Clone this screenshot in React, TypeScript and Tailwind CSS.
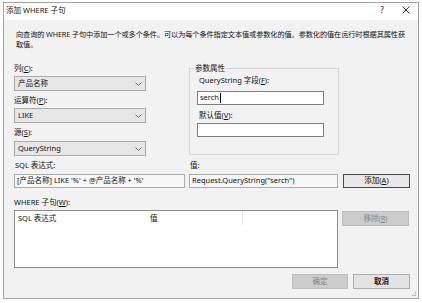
import React from "react"

function Chevron() {
  return (
    <svg width="7" height="4" viewBox="0 0 7 4" className="mr-[3px]">
      <path d="M0.5 0.5 L3.5 3.5 L6.5 0.5" fill="none" stroke="#6a6a6a" strokeWidth="1" />
    </svg>
  )
}

function Select({ value }: { value: string }) {
  return (
    <div className="flex h-[15px] w-[132px] items-center justify-between border border-[#acacac] bg-[#e6e6e6] pl-[3px]">
      <span>{value}</span>
      <Chevron />
    </div>
  )
}

function Label({ children, className = "" }: { children: React.ReactNode; className?: string }) {
  return <div className={`h-[12px] leading-[12px] whitespace-nowrap ${className}`}>{children}</div>
}

export default function App() {
  return (
    <div className="min-h-screen bg-white pl-[3px] pt-[2px] font-['Noto_Sans','Noto_Sans_CJK_SC',sans-serif] text-[7.5px] text-[#111]">
      <div className="relative flex h-[297px] w-[416px] flex-col border border-[#a3a3a3] bg-[#f2f2f2]">
        {/* Title bar */}
        <div className="flex h-[17px] items-start bg-white pl-[2px] pt-[1px]">
          <span className="leading-[12px]">添加 WHERE 子句</span>
          <div className="ml-auto flex h-[12px] items-center">
            <span className="w-[24px] text-center text-[8px] leading-[12px]">?</span>
            <span className="flex w-[24px] justify-center">
              <svg width="8" height="8" viewBox="0 0 8 8">
                <path d="M0.5 0.5 L7.5 7.5 M7.5 0.5 L0.5 7.5" stroke="#222" strokeWidth="0.9" />
              </svg>
            </span>
          </div>
        </div>

        {/* Body */}
        <div className="flex flex-1 flex-col pl-[10px] pr-[8px]">
          <div className="mt-[9px] pl-[2px] text-[7.2px] leading-[10px] tracking-[-0.1px] whitespace-nowrap">
            <div>向查询的 WHERE 子句中添加一个或多个条件。可以为每个条件指定文本值或参数化的值。参数化的值在运行时根据其属性获</div>
            <div>取值。</div>
          </div>

          {/* Column / operator / source + parameter group */}
          <div className="mt-[13px] flex">
            <div className="flex w-[132px] flex-col">
              <Label>列(<u>C</u>):</Label>
              <div className="mt-[2px]"><Select value="产品名称" /></div>
              <Label className="mt-[3px]">运算符(<u>P</u>):</Label>
              <div className="mt-[2px]"><Select value="LIKE" /></div>
              <Label className="mt-[3px]">源(<u>S</u>):</Label>
              <div className="mt-[3px]"><Select value="QueryString" /></div>
            </div>

            <fieldset className="ml-[43px] h-[93px] w-[150px] border border-[#d6d6d6] pl-[7px]">
              <legend className="ml-[-3px] px-[1px] leading-[12px]">参数属性</legend>
              <Label className="pl-[2px]">QueryString 字段(<u>F</u>):</Label>
              <div className="mt-[5px] flex h-[14px] w-[127px] items-center border border-[#7f7f7f] bg-white pl-[2px]">
                <span>serch</span>
                <span className="ml-[1px] h-[10px] w-px bg-black" />
              </div>
              <Label className="mt-[4px] pl-[2px]">默认值(<u>V</u>):</Label>
              <div className="mt-[2px] h-[14px] w-[127px] border border-[#7f7f7f] bg-white" />
            </fieldset>
          </div>

          {/* Expression row */}
          <div className="mt-[3px] flex items-end">
            <div className="flex w-[171px] flex-col">
              <Label className="pl-[1px]">SQL 表达式:</Label>
              <div className="mt-[3px] flex h-[14px] items-center border border-[#acacac] bg-[#f7f7f7] pl-[2px] whitespace-nowrap">
                [产品名称] LIKE '%' + @产品名称 + '%'
              </div>
            </div>
            <div className="ml-[4px] flex w-[149px] flex-col">
              <Label className="pl-[1px]">值:</Label>
              <div className="mt-[3px] flex h-[14px] items-center border border-[#acacac] bg-[#f7f7f7] pl-[2px] whitespace-nowrap">
                Request.QueryString("serch")
              </div>
            </div>
            <button className="ml-[5px] flex h-[14px] w-[67px] items-center justify-center border border-[#4a4a4a] bg-[#e8e8e8]">
              添加(<u>A</u>)
            </button>
          </div>

          {/* Where clause list */}
          <Label className="mt-[8px]">WHERE 子句(<u>W</u>):</Label>
          <div className="mt-[2px] flex items-start">
            <div className="h-[58px] w-[324px] border border-[#8c8c8c] bg-white">
              <div className="flex h-[14px]">
                <div className="w-[135px] pl-[3px] pt-[1px] leading-[12px]">SQL 表达式</div>
                <div className="w-[93px] border-r border-[#e3e3e3] pt-[1px] leading-[12px]">值</div>
              </div>
            </div>
            <button className="ml-[4px] mt-[1px] flex h-[15px] w-[67px] items-center justify-center border border-[#bdbdbd] bg-[#cccccc] text-[#858585]">
              移除(<u>R</u>)
            </button>
          </div>

          {/* Dialog buttons */}
          <div className="mt-[6px] flex justify-end gap-[5px]">
            <button className="flex h-[15px] w-[56px] items-center justify-center border border-[#bdbdbd] bg-[#cccccc] text-[#858585]">
              确定
            </button>
            <button className="flex h-[15px] w-[57px] items-center justify-center border border-[#adadad] bg-[#e3e3e3] font-semibold">
              取消
            </button>
          </div>
        </div>

        <svg width="5" height="5" viewBox="0 0 5 5" className="absolute bottom-[1px] right-[1px]">
          <rect x="3" y="0" width="1" height="1" fill="#b0b0b0" />
          <rect x="1.5" y="1.5" width="1" height="1" fill="#b0b0b0" />
          <rect x="3" y="1.5" width="1" height="1" fill="#b0b0b0" />
          <rect x="0" y="3" width="1" height="1" fill="#b0b0b0" />
          <rect x="1.5" y="3" width="1" height="1" fill="#b0b0b0" />
          <rect x="3" y="3" width="1" height="1" fill="#b0b0b0" />
        </svg>
      </div>
    </div>
  )
}
